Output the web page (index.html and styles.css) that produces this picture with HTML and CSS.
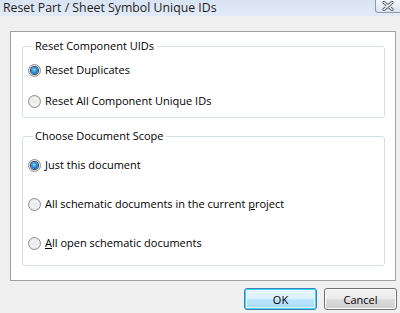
FILE: index.html
```html
<!DOCTYPE html>
<html>
<head>
<meta charset="utf-8">
<link rel="stylesheet" href="styles.css">
</head>
<body>
<div class="window">
  <div class="titlebar">
    <span class="title">Reset Part / Sheet Symbol Unique IDs</span>
    <div class="close">
      <svg width="16" height="10" viewBox="0 0 16 10">
        <path d="M4 1.5 L12 8.5 M12 1.5 L4 8.5" stroke="#5a6070" stroke-width="3.2" stroke-linecap="round"/>
        <path d="M4 1.5 L12 8.5 M12 1.5 L4 8.5" stroke="#f4f6f9" stroke-width="1.4" stroke-linecap="round"/>
      </svg>
    </div>
  </div>
  <div class="client">
    <div class="panel">
      <fieldset class="group g1">
        <legend>Reset Component UIDs</legend>
        <label class="opt"><span class="radio checked"></span>Reset Duplicates</label>
        <label class="opt"><span class="radio"></span>Reset All Component Unique IDs</label>
      </fieldset>
      <fieldset class="group g2">
        <legend>Choose Document Scope</legend>
        <label class="opt"><span class="radio checked"></span><span><u>J</u>ust this document</span></label>
        <label class="opt"><span class="radio"></span><span>All schematic documents in the current <u>p</u>roject</span></label>
        <label class="opt"><span class="radio"></span><span><u>A</u>ll open schematic documents</span></label>
      </fieldset>
    </div>
    <div class="buttons">
      <button class="btn default">OK</button>
      <button class="btn">Cancel</button>
    </div>
  </div>
</div>
</body>
</html>
```

FILE: styles.css
```css
html, body {
  margin: 0;
  padding: 0;
  width: 400px;
  height: 313px;
  overflow: hidden;
  background: #f0f0f0;
  font-family: "Open Sans", "Noto Sans", sans-serif;
  font-size: 11px;
  color: #000;
}
.window {
  width: 400px;
  height: 313px;
  display: flex;
  flex-direction: column;
}
.titlebar {
  height: 16px;
  flex: none;
  background: linear-gradient(#d9e4f3, #e1eaf6);
  display: flex;
  align-items: flex-start;
  justify-content: space-between;
}
.title {
  font-size: 12.3px;
  line-height: 16px;
  padding-left: 3px;
  color: #1e1e1e;
}
.close {
  width: 26px;
  height: 13px;
  margin-right: -1px;
  box-sizing: border-box;
  border: 1px solid #8e9aab;
  border-top: none;
  border-radius: 0 0 0 3px;
  background: linear-gradient(#f2f5f9, #dce3ec);
  display: flex;
  align-items: center;
  justify-content: center;
}
.close svg { display: block; }
.client {
  flex: 1;
  padding: 15px 0 0 10px;
}
.panel {
  width: 386px;
  height: 250px;
  box-sizing: border-box;
  background: #fff;
  border: 1px solid #a0a0a0;
  padding: 6px 0 0 11px;
}
.group {
  width: 363px;
  box-sizing: border-box;
  margin: 0;
  border: 1px solid #d5dfe5;
  border-radius: 3px;
  padding: 0 0 0 5px;
  display: flex;
  flex-direction: column;
}
.group legend {
  padding: 0 2px;
  margin-left: 5px;
  line-height: 16px;
}
.g1 { padding-top: 8px; padding-bottom: 8px; gap: 15px; }
.g2 { margin-top: 10px; padding-top: 13px; padding-bottom: 14px; gap: 23px; }
.opt {
  display: flex;
  align-items: center;
  height: 16px;
  line-height: 16px;
  white-space: nowrap;
}
.radio {
  width: 13px;
  height: 13px;
  box-sizing: border-box;
  border-radius: 50%;
  border: 1px solid #8f8f8f;
  background: radial-gradient(circle at 50% 50%, #e6e6e6 0, #f4f4f4 45%, #cfcfcf 100%);
  margin-right: 4px;
  flex: none;
  display: flex;
  align-items: center;
  justify-content: center;
}
.radio.checked::after {
  content: "";
  width: 7px;
  height: 7px;
  border-radius: 50%;
  background: radial-gradient(circle at 45% 40%, #8ad8ff 0, #2f8fd6 45%, #0b4a85 100%);
  box-shadow: 0 0 0 1px #27415f;
}
u { text-decoration: underline; text-underline-offset: 1px; }
.buttons {
  display: flex;
  justify-content: flex-end;
  gap: 7px;
  padding: 7px 3px 0 0;
}
.btn {
  width: 73px;
  height: 22px;
  box-sizing: border-box;
  font-family: inherit;
  font-size: 11px;
  color: #000;
  border: 1px solid #707070;
  border-radius: 3px;
  background: linear-gradient(#f2f2f2 0, #ebebeb 50%, #dddddd 51%, #cfcfcf 100%);
  padding: 0;
  box-shadow: inset 0 0 0 1px #fcfcfc;
}
.btn.default {
  border-color: #3c7fb1;
  box-shadow: inset 0 0 0 1px #48d1fa, inset 0 0 0 2px #e4f4fc;
  background: linear-gradient(#eaf6fd 0, #d9f0fc 50%, #bee6fd 51%, #a7d9f5 100%);
}
```
